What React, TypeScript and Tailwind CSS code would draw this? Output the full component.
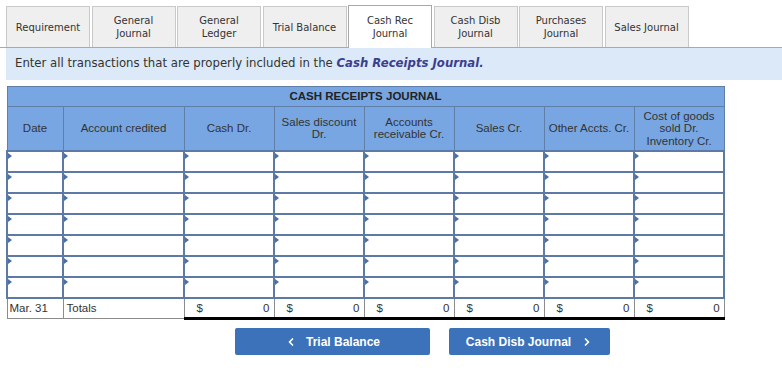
import { ChevronLeft, ChevronRight } from "lucide-react";

const tabs = [
  { label: "Requirement" },
  { label: "General Journal" },
  { label: "General Ledger" },
  { label: "Trial Balance" },
  { label: "Cash Rec Journal", active: true },
  { label: "Cash Disb Journal" },
  { label: "Purchases Journal" },
  { label: "Sales Journal" },
];

const columns = [
  { key: "date", label: "Date", width: 56 },
  { key: "account", label: "Account credited", width: 121 },
  { key: "cash", label: "Cash Dr.", width: 90 },
  { key: "discount", label: "Sales discount Dr.", width: 90 },
  { key: "ar", label: "Accounts receivable Cr.", width: 90 },
  { key: "sales", label: "Sales Cr.", width: 90 },
  { key: "other", label: "Other Accts. Cr.", width: 90 },
  { key: "cogs", label: "Cost of goods sold Dr. Inventory Cr.", width: 90 },
];

const rows = Array.from({ length: 7 });

function InputCell() {
  return (
    <td className="h-[21px] border-2 border-[#5d79a5] bg-white p-0">
      <div className="relative h-full w-full">
        <span className="absolute left-0 top-[1px] h-0 w-0 border-y-[3px] border-l-[4px] border-y-transparent border-l-[#4a70a8]" />
      </div>
    </td>
  );
}

export default function App() {
  return (
    <div className="h-[390px] w-[782px] bg-white font-['DejaVu_Sans',sans-serif] text-[#333]">
      <div className="flex items-end gap-[1.5px] border-b border-[#a9a9a9] pl-[6px] pt-[5px]">
        {tabs.map((tab) =>
          tab.active ? (
            <div
              key={tab.label}
              className="-mb-px flex h-[43px] w-[84px] items-center justify-center border border-b-0 border-[#a9a9a9] bg-white px-1 text-center text-[10px] leading-[13px] text-[#333]"
            >
              <span>
                Cash Rec
                <br />
                Journal
              </span>
            </div>
          ) : (
            <div
              key={tab.label}
              className="flex h-[41px] w-[84px] items-center justify-center border border-b-0 border-[#c9c9c9] bg-[#efefef] px-1 text-center text-[10px] leading-[13px] text-[#333]"
            >
              {tab.label}
            </div>
          ),
        )}
      </div>

      <div className="ml-[6px] flex h-[32px] items-center bg-[#dbe9f8] pl-[9px] text-[11.7px] text-[#333]">
        <span>
          Enter all transactions that are properly included in the{" "}
          <b className="italic text-[#3b3f8f]">Cash Receipts Journal.</b>
        </span>
      </div>

      <table className="ml-[6px] mt-[6px] w-[717px] table-fixed border-collapse font-['Liberation_Sans',Arial,sans-serif] text-[11.5px] leading-[12.5px]">
        <colgroup>
          {columns.map((col) => (
            <col key={col.key} style={{ width: col.width }} />
          ))}
        </colgroup>
        <thead>
          <tr>
            <th
              colSpan={8}
              className="h-[20px] border border-[#5f7ea8] bg-[#78a6e2] text-center text-[11.5px] font-bold text-[#222]"
            >
              CASH RECEIPTS JOURNAL
            </th>
          </tr>
          <tr>
            {columns.map((col) => (
              <th
                key={col.key}
                className="h-[44px] border border-[#5f7ea8] bg-[#78a6e2] px-[3px] text-center align-middle font-normal text-[#333]"
              >
                {col.label}
              </th>
            ))}
          </tr>
        </thead>
        <tbody>
          {rows.map((_, i) => (
            <tr key={i}>
              {columns.map((col) => (
                <InputCell key={col.key} />
              ))}
            </tr>
          ))}
          <tr>
            <td className="h-[21px] border border-[#8c8c8c] border-t-[#5d79a5] pl-[2px] text-[#333]">
              Mar. 31
            </td>
            <td className="h-[21px] border border-[#8c8c8c] border-t-[#5d79a5] pl-[3px] text-[#333]">
              Totals
            </td>
            {columns.slice(2).map((col) => (
              <td
                key={col.key}
                className="h-[21px] border-x border-b-[3px] border-t-2 border-x-[#8c8c8c] border-b-black border-t-black px-[4px] text-[#333]"
              >
                <div className="flex justify-between">
                  <span className="pl-[8px]">$</span>
                  <span>0</span>
                </div>
              </td>
            ))}
          </tr>
        </tbody>
      </table>

      <div className="mt-[8px] flex gap-[19px] pl-[235px] font-['Liberation_Sans',Arial,sans-serif]">
        <button
          type="button"
          className="flex h-[27px] w-[195px] items-center justify-center gap-[9px] rounded-[2px] bg-[#3b72b9] text-[12px] font-bold text-white"
        >
          <ChevronLeft size={12} strokeWidth={3.5} />
          Trial Balance
        </button>
        <button
          type="button"
          className="flex h-[27px] w-[161px] items-center justify-center gap-[10px] rounded-[2px] bg-[#3b72b9] text-[12px] font-bold text-white"
        >
          Cash Disb Journal
          <ChevronRight size={12} strokeWidth={3.5} />
        </button>
      </div>
    </div>
  );
}
